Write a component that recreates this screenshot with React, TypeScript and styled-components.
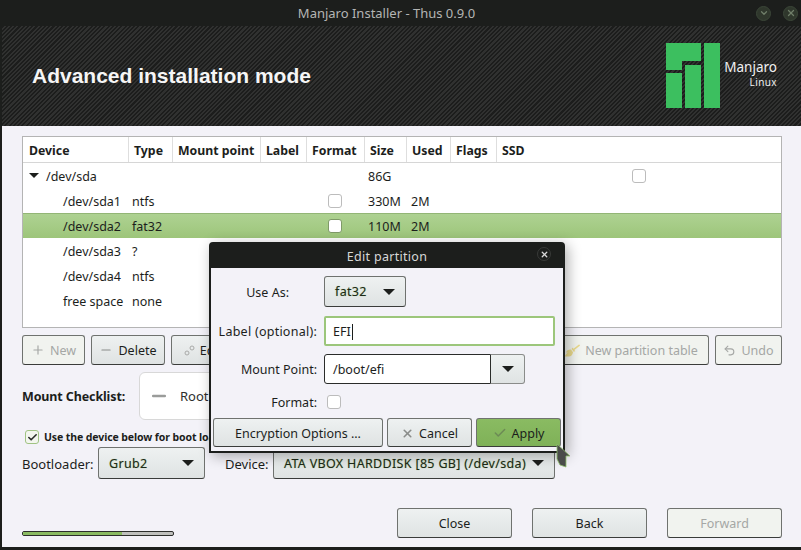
import React from "react";
import styled, { createGlobalStyle } from "styled-components";
import { Check, ChevronDown, Minus, Plus, Undo2, X } from "lucide-react";
import { FaBroom } from "react-icons/fa";

const GlobalStyles = createGlobalStyle`
  html, body {
    margin: 0;
    height: 100%;
    overflow: hidden;
  }
  body {
    font-family: "Noto Sans", "DejaVu Sans", sans-serif;
    font-size: 13px;
    color: #1c1e1c;
  }
`;

const Window = styled.div`
  position: relative;
  width: 801px;
  height: 550px;
  box-sizing: border-box;
  display: flex;
  flex-direction: column;
  background: #f3f2f8;
  border-left: 2px solid #1c1e1c;
  border-bottom: 3px solid #1c1e1c;
`;

const TitleBar = styled.div`
  height: 26px;
  flex: none;
  display: flex;
  align-items: center;
  background: #1c1e1c;
  padding-right: 3px;
  margin-left: -2px;
`;

const TitleText = styled.div`
  flex: 1;
  padding-left: 17px;
  text-align: center;
  color: #b4b5b4;
  font-size: 13px;
`;

const WindowControls = styled.div`
  display: flex;
  gap: 12px;
`;

const WindowControl = styled.div`
  width: 15px;
  height: 15px;
  box-sizing: border-box;
  border-radius: 50%;
  display: flex;
  align-items: center;
  justify-content: center;
  background: #2f372c;
  border: 1px solid #3b4638;
  color: #6f7e69;
`;

const Header = styled.div`
  height: 100px;
  flex: none;
  box-sizing: border-box;
  display: flex;
  align-items: center;
  justify-content: space-between;
  padding: 0 24px 0 30px;
  background: repeating-linear-gradient(
    135deg,
    #1c1d1c 0,
    #1c1d1c 1.5px,
    #303130 1.5px,
    #303130 3px
  );
`;

const HeaderTitle = styled.h1`
  margin: 0 0 1px;
  font-family: "Liberation Sans", Arial, sans-serif;
  font-size: 21px;
  font-weight: 700;
  color: #f6f6f6;
`;

const Brand = styled.div`
  display: flex;
  align-items: center;
  gap: 4px;
  margin-bottom: 1px;
`;

const BrandText = styled.div`
  display: flex;
  flex-direction: column;
  align-items: flex-end;
  color: #f0f0f0;
  font-size: 13.5px;
  line-height: 17px;
  margin-bottom: 3px;
`;

const BrandSub = styled.span`
  font-size: 10px;
  line-height: 13px;
  letter-spacing: 0.4px;
`;

const Content = styled.div`
  flex: 1;
  display: flex;
  flex-direction: column;
  padding: 10px 19px 9px 20px;
  min-height: 0;
`;

const gridColumns = "105px 44px 88px 46px 58px 42px 44px 46px 1fr";

const Table = styled.div`
  height: 192px;
  flex: none;
  box-sizing: border-box;
  border: 1px solid #b4b4b4;
  background: #fff;
`;

const TableHead = styled.div`
  display: grid;
  grid-template-columns: ${gridColumns};
  height: 26px;
  box-sizing: border-box;
  border-bottom: 1px solid #d6d6d6;
`;

const HeadCell = styled.div`
  display: flex;
  align-items: center;
  padding: 1px 0 0 5px;
  font-weight: 700;
  font-size: 12.3px;
  border-left: 1px solid #dedede;
  &:first-child {
    border-left: 0;
    padding-left: 6px;
  }
`;

const TableRow = styled.div<{ $selected?: boolean }>`
  display: grid;
  grid-template-columns: ${gridColumns};
  height: 25px;
  box-sizing: border-box;
  align-items: center;
  background: ${(p) =>
    p.$selected ? "linear-gradient(#aed292, #9dc57a)" : "transparent"};
  border-top: ${(p) => (p.$selected ? "1px solid #93b676" : "0")};
`;

const Cell = styled.div<{ $indent?: number; $center?: boolean }>`
  display: flex;
  align-items: center;
  justify-content: ${(p) => (p.$center ? "center" : "flex-start")};
  padding-left: ${(p) => p.$indent ?? 4}px;
  padding-top: ${(p) => (p.$center ? 0 : 1)}px;
  font-size: 12.5px;
  white-space: nowrap;
`;

const TreeArrow = styled.span`
  width: 0;
  height: 0;
  margin: 0 7px 1px -16px;
  border-left: 5px solid transparent;
  border-right: 5px solid transparent;
  border-top: 5.5px solid #1c1e1c;
`;

const CheckBox = styled.span<{ $active?: boolean; $green?: boolean }>`
  width: 14px;
  height: 14px;
  box-sizing: border-box;
  display: inline-flex;
  align-items: center;
  justify-content: center;
  flex: none;
  border-radius: 3px;
  background: ${(p) => (p.$green ? "#f3f6ef" : "#fff")};
  border: 1px solid
    ${(p) => (p.$green ? "#a0c383" : p.$active ? "#7f9a68" : "#bcbcbc")};
`;

const Toolbar = styled.div`
  display: flex;
  gap: 6px;
  height: 30px;
  margin-top: 7px;
  flex: none;
`;

const ToolbarSpacer = styled.div`
  flex: 1;
`;

const Button = styled.div<{
  $disabled?: boolean;
  $primary?: boolean;
  $width?: number;
  $compact?: boolean;
}>`
  width: ${(p) => (p.$width ? `${p.$width}px` : "auto")};
  height: ${(p) => (p.$compact ? 29 : 30)}px;
  box-sizing: border-box;
  flex: none;
  display: flex;
  align-items: center;
  justify-content: center;
  gap: 5px;
  padding-top: ${(p) => (p.$compact ? 1 : 0)}px;
  border-radius: 3px;
  border: 1px solid #6f726f;
  border-bottom-color: #3a3c3a;
  font-size: 12.5px;
  color: ${(p) => (p.$disabled ? "#a5a7a5" : "#1c1e1c")};
  background: ${(p) =>
    p.$primary
      ? "linear-gradient(#8abb62, #7fb158)"
      : p.$disabled
        ? "#f1f3ef"
        : "linear-gradient(#eef1f1, #dfe3e3)"};
`;

const ChecklistRow = styled.div`
  display: flex;
  align-items: center;
  height: 48px;
  margin-top: 7px;
  flex: none;
`;

const ChecklistLabel = styled.div`
  width: 117px;
  padding-top: 1px;
  font-weight: 700;
  font-size: 12.5px;
  letter-spacing: -0.12px;
`;

const ChecklistBox = styled.div`
  width: 400px;
  height: 48px;
  box-sizing: border-box;
  display: flex;
  align-items: center;
  gap: 11px;
  padding-left: 9px;
  background: #fff;
  border: 1px solid #d8d8d8;
  border-radius: 6px;
  color: #2d2f2d;
`;

const BootRow = styled.div`
  display: flex;
  align-items: center;
  gap: 5px;
  margin: 10px 0 0 3px;
  height: 14px;
  flex: none;
`;

const BootLabel = styled.span`
  font-size: 10.5px;
  font-weight: 700;
  letter-spacing: -0.1px;
  white-space: nowrap;
`;

const BootloaderRow = styled.div`
  display: flex;
  align-items: center;
  height: 32px;
  margin-top: 3px;
  flex: none;
`;

const RowLabel = styled.span<{ $width: number; $offset?: number }>`
  width: ${(p) => p.$width}px;
  margin-left: ${(p) => p.$offset ?? 0}px;
  padding-top: 2px;
  flex: none;
  white-space: nowrap;
`;

const Combo = styled.div<{ $width: number; $short?: boolean }>`
  width: ${(p) => p.$width}px;
  height: ${(p) => (p.$short ? 31 : 32)}px;
  align-self: flex-start;
  box-sizing: border-box;
  display: flex;
  align-items: center;
  justify-content: space-between;
  padding: 0 10px;
  border: 1px solid #6f726f;
  border-bottom-color: #3a3c3a;
  border-radius: 3px;
  background: linear-gradient(#eef1f1, #dfe3e3);
  font-size: 12.5px;
  letter-spacing: 0.33px;
  color: #1f2a1a;
  text-shadow: 0 0 1px #9cc47c;
  white-space: nowrap;
`;

const DropArrow = styled.span`
  width: 0;
  height: 0;
  flex: none;
  border-left: 6.5px solid transparent;
  border-right: 6.5px solid transparent;
  border-top: 6px solid #1c1e1c;
`;

const BottomBar = styled.div`
  margin-top: auto;
  display: flex;
  align-items: flex-end;
  justify-content: space-between;
  flex: none;
`;

const Progress = styled.div`
  width: 152px;
  height: 5px;
  margin-bottom: 2px;
  box-sizing: border-box;
  border: 1px solid #2c2e2c;
  border-radius: 2px;
  background: #bfc0bd;
`;

const ProgressFill = styled.div`
  height: 100%;
  background: #8abb62;
`;

const NavButtons = styled.div`
  display: flex;
  gap: 20px;
`;

const Dialog = styled.div`
  position: absolute;
  left: 207px;
  top: 242px;
  width: 356px;
  height: 211px;
  box-sizing: border-box;
  display: flex;
  flex-direction: column;
  background: #f3f2f8;
  border: 2px solid #1c1e1c;
  border-radius: 4px 4px 0 0;
  box-shadow: 3px 3px 14px rgba(0, 0, 0, 0.32);
`;

const DialogTitle = styled.div`
  position: relative;
  height: 24px;
  flex: none;
  display: flex;
  align-items: center;
  justify-content: center;
  background: #1c1e1c;
  color: #d8d8d8;
  font-size: 12.5px;
  letter-spacing: 0.3px;
`;

const DialogClose = styled.div`
  position: absolute;
  right: 12px;
  top: 3px;
  width: 14px;
  height: 14px;
  box-sizing: border-box;
  border-radius: 50%;
  display: flex;
  align-items: center;
  justify-content: center;
  border: 1px solid #383a38;
  color: #d8d8d8;
`;

const Form = styled.div`
  display: grid;
  grid-template-columns: 106px 1fr;
  grid-template-rows: 32px 30px 30px 20px;
  column-gap: 7px;
  row-gap: 8px;
  padding: 8px 8px 0 0;
`;

const FieldLabel = styled.div<{ $inset?: number; $tracking?: number }>`
  display: flex;
  align-items: center;
  justify-content: flex-end;
  padding-top: 1px;
  padding-right: ${(p) => p.$inset ?? 0}px;
  font-size: 12.5px;
  letter-spacing: ${(p) => p.$tracking ?? 0}px;
  white-space: nowrap;
`;

const FieldCell = styled.div<{ $inset?: number }>`
  display: flex;
  align-items: center;
  padding-left: ${(p) => p.$inset ?? 0}px;
`;

const TextEntry = styled.div<{ $focused?: boolean }>`
  flex: 1;
  height: 30px;
  box-sizing: border-box;
  display: flex;
  align-items: center;
  padding: 1px 0 0 8px;
  background: #fff;
  font-size: 12.5px;
  border: 1px solid #2a2c2a;
  border-radius: 3px 0 0 3px;
  ${(p) =>
    p.$focused &&
    `
    border: 2px solid #9cc67b;
    border-radius: 2px;
    padding-left: 7px;
  `}
`;

const Caret = styled.span`
  width: 1px;
  height: 16px;
  margin-left: 1px;
  background: #1c1e1c;
`;

const EntryButton = styled.div`
  width: 34px;
  height: 30px;
  box-sizing: border-box;
  display: flex;
  align-items: center;
  justify-content: center;
  background: linear-gradient(#eef1f1, #dfe3e3);
  border: 1px solid #8a8c8a;
  border-left: 0;
  border-radius: 0 3px 3px 0;
`;

const EntryWrap = styled.div`
  display: flex;
  width: 201px;
`;

const DialogActions = styled.div`
  display: flex;
  gap: 4px;
  padding: 6px 2px 0;
`;

const Cursor = styled.svg`
  position: absolute;
  left: 554px;
  top: 443px;
`;

type Partition = {
  device: string;
  type?: string;
  size?: string;
  used?: string;
  format?: boolean;
  ssd?: boolean;
  root?: boolean;
  selected?: boolean;
};

const partitions: Partition[] = [
  { device: "/dev/sda", size: "86G", ssd: true, root: true },
  { device: "/dev/sda1", type: "ntfs", size: "330M", used: "2M", format: true },
  { device: "/dev/sda2", type: "fat32", size: "110M", used: "2M", format: true, selected: true },
  { device: "/dev/sda3", type: "?" },
  { device: "/dev/sda4", type: "ntfs" },
  { device: "free space", type: "none" },
];

const columns = ["Device", "Type", "Mount point", "Label", "Format", "Size", "Used", "Flags", "SSD"];

function ManjaroLogo() {
  return (
    <svg width="54" height="65" viewBox="0 0 54 65" fill="#3cbf5f">
      <path d="M0 0H35V18H16V27H0Z" />
      <rect x="0" y="30" width="16" height="35" />
      <rect x="19" y="22" width="16" height="43" />
      <rect x="38" y="0" width="16" height="65" />
    </svg>
  );
}

function EditIcon() {
  return (
    <svg width="11" height="11" viewBox="0 0 11 11" fill="none" stroke="#a9aaa8">
      <circle cx="3" cy="8" r="2" />
      <circle cx="8" cy="3" r="2" />
    </svg>
  );
}

function PartitionRow({ partition }: { partition: Partition }) {
  return (
    <TableRow $selected={partition.selected}>
      <Cell $indent={partition.root ? 22 : 40}>
        {partition.root && <TreeArrow />}
        {partition.device}
      </Cell>
      <Cell>{partition.type}</Cell>
      <Cell />
      <Cell />
      <Cell $indent={0} $center>
        {partition.format && <CheckBox $active={partition.selected} />}
      </Cell>
      <Cell>{partition.size}</Cell>
      <Cell $indent={5}>{partition.used}</Cell>
      <Cell />
      <Cell $indent={0} $center>
        {partition.ssd && <CheckBox />}
      </Cell>
    </TableRow>
  );
}

export default function App() {
  return (
    <Window>
      <GlobalStyles />
      <TitleBar>
        <TitleText>Manjaro Installer - Thus 0.9.0</TitleText>
        <WindowControls>
          <WindowControl>
            <ChevronDown size={10} strokeWidth={3} />
          </WindowControl>
          <WindowControl>
            <X size={10} strokeWidth={3} />
          </WindowControl>
        </WindowControls>
      </TitleBar>
      <Header>
        <HeaderTitle>Advanced installation mode</HeaderTitle>
        <Brand>
          <ManjaroLogo />
          <BrandText>
            Manjaro
            <BrandSub>Linux</BrandSub>
          </BrandText>
        </Brand>
      </Header>
      <Content>
        <Table>
          <TableHead>
            {columns.map((c) => (
              <HeadCell key={c}>{c}</HeadCell>
            ))}
          </TableHead>
          {partitions.map((p) => (
            <PartitionRow key={p.device} partition={p} />
          ))}
        </Table>
        <Toolbar>
          <Button $disabled $width={63}>
            <Plus size={14} color="#a5a7a5" />
            New
          </Button>
          <Button $width={74}>
            <Minus size={14} color="#8a8c8a" />
            Delete
          </Button>
          <Button $width={64}>
            <EditIcon />
            Edit
          </Button>
          <ToolbarSpacer />
          <Button $disabled $width={155}>
            <FaBroom size={15} color="#e9d98c" />
            New partition table
          </Button>
          <Button $disabled $width={67}>
            <Undo2 size={13} color="#a5a7a5" />
            Undo
          </Button>
        </Toolbar>
        <ChecklistRow>
          <ChecklistLabel>Mount Checklist:</ChecklistLabel>
          <ChecklistBox>
            <Minus size={20} color="#9a9c9a" strokeWidth={3} />
            Root
          </ChecklistBox>
        </ChecklistRow>
        <BootRow>
          <CheckBox $green>
            <Check size={11} strokeWidth={3.5} color="#2a2c2a" />
          </CheckBox>
          <BootLabel>Use the device below for boot loader installation</BootLabel>
        </BootRow>
        <BootloaderRow>
          <RowLabel $width={76}>Bootloader:</RowLabel>
          <Combo $width={107}>
            Grub2
            <DropArrow />
          </Combo>
          <RowLabel $width={48} $offset={20}>
            Device:
          </RowLabel>
          <Combo $width={282}>
            ATA VBOX HARDDISK [85 GB] (/dev/sda)
            <DropArrow />
          </Combo>
        </BootloaderRow>
        <BottomBar>
          <Progress>
            <ProgressFill style={{ width: "66%" }} />
          </Progress>
          <NavButtons>
            <Button $width={115}>Close</Button>
            <Button $width={115}>Back</Button>
            <Button $disabled $width={115}>
              Forward
            </Button>
          </NavButtons>
        </BottomBar>
      </Content>
      <Dialog>
        <DialogTitle>
          Edit partition
          <DialogClose>
            <X size={9} strokeWidth={3.5} />
          </DialogClose>
        </DialogTitle>
        <Form>
          <FieldLabel $inset={28}>Use As:</FieldLabel>
          <FieldCell>
            <Combo $width={82} $short>
              fat32
              <DropArrow />
            </Combo>
          </FieldCell>
          <FieldLabel $tracking={0.25}>Label (optional):</FieldLabel>
          <FieldCell>
            <TextEntry $focused>
              EFI
              <Caret />
            </TextEntry>
          </FieldCell>
          <FieldLabel>Mount Point:</FieldLabel>
          <FieldCell>
            <EntryWrap>
              <TextEntry>/boot/efi</TextEntry>
              <EntryButton>
                <DropArrow />
              </EntryButton>
            </EntryWrap>
          </FieldCell>
          <FieldLabel>Format:</FieldLabel>
          <FieldCell $inset={3}>
            <CheckBox />
          </FieldCell>
        </Form>
        <DialogActions>
          <Button $width={170} $compact>
            Encryption Options ...
          </Button>
          <Button $width={85} $compact>
            <X size={13} strokeWidth={3} color="#8a8c8a" />
            Cancel
          </Button>
          <Button $primary $width={85} $compact>
            <Check size={14} strokeWidth={2.5} color="#6c8a55" />
            Apply
          </Button>
        </DialogActions>
      </Dialog>
      <Cursor width="16" height="26" viewBox="0 0 16 26">
        <path d="M1 1L14 13H10V24L4 22L1 16Z" fill="#4a4c4a" stroke="#8fbf6c" strokeWidth="0.8" />
      </Cursor>
    </Window>
  );
}
